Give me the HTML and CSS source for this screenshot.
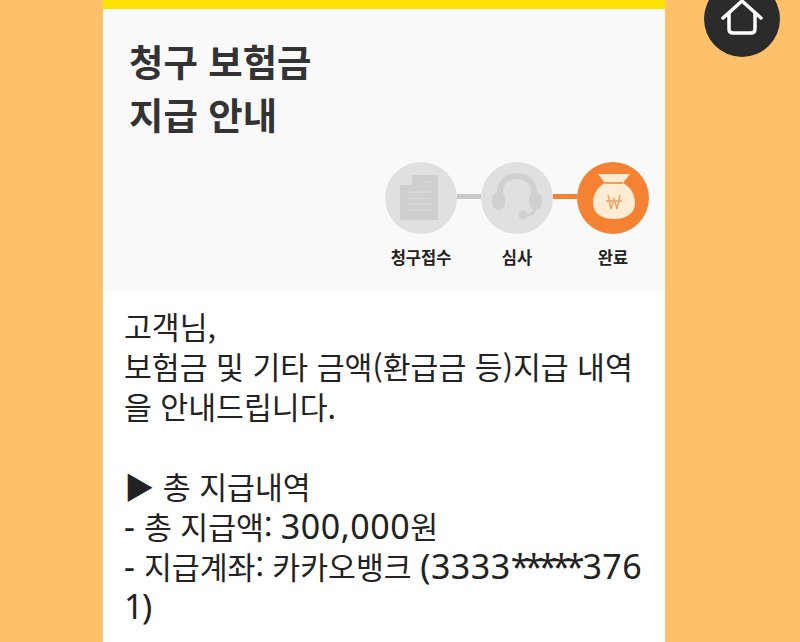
FILE: index.html
```html
<!DOCTYPE html>
<html lang="ko">
<head>
<meta charset="utf-8"/>
<title>청구 보험금 지급 안내</title>
<link rel="stylesheet" href="styles.css">
</head>
<body>
<div class="card">
  <div class="head">
    <h1>청구 보험금<br>지급 안내</h1>
    <div class="steps">
      <div class="step">
        <div class="circle">
          <svg width="72" height="72" viewBox="0 0 72 72">
            <path d="M15 23H27V13H53V58H15Z" fill="#cfcfcf"/>
            <path d="M22 30H46M22 36H46M22 42H46M22 48H46M38 20H46" stroke="#dedede" stroke-width="1.2" fill="none"/>
          </svg>
        </div>
        <span>청구접수</span>
      </div>
      <div class="line"></div>
      <div class="step">
        <div class="circle">
          <svg width="72" height="72" viewBox="0 0 72 72">
            <path d="M19 36V30C19 20 27 14 36 14C45 14 53 20 53 30V36" stroke="#d0d0d0" stroke-width="6" fill="none"/>
            <rect x="11" y="30" width="13" height="18" rx="6.500" fill="#d0d0d0"/>
            <rect x="48" y="30" width="13" height="18" rx="6.500" fill="#d0d0d0"/>
            <path d="M54 46C54 51 49 53 44 53" stroke="#d0d0d0" stroke-width="3" fill="none"/>
            <circle cx="42" cy="53" r="4.500" fill="#d0d0d0"/>
          </svg>
        </div>
        <span>심사</span>
      </div>
      <div class="line on"></div>
      <div class="step">
        <div class="circle on">
          <svg width="72" height="72" viewBox="0 0 72 72">
            <path d="M21 12H53L46 21C54 25 58 33 58 41C58 51 50 57 37 57C24 57 16 51 16 41C16 33 20 25 28 21Z" fill="#fdecd2"/>
            <path d="M28 21H46" stroke="#f58132" stroke-width="1.500"/>
            <path d="M31 33L34 47L37 37L40 47L43 33M29 39H45" stroke="#e8a46c" stroke-width="1.500" fill="none"/>
          </svg>
        </div>
        <span>완료</span>
      </div>
    </div>
  </div>
  <div class="content">
    <p>고객님,<br>보험금 및 기타 금액(환급금 등)지급 내역<br>을 안내드립니다.</p>
    <p class="gap">▶ 총 지급내역<br><span class="num">-</span> 총 지급액: <span class="num">300,000</span>원<br><span class="num">-</span> 지급계좌: 카카오뱅크 <span class="num">(3333<span class="stars">*****</span>376</span><br><span class="num tight">1)</span></p>
  </div>
</div>
<a class="home">
  <svg width="44" height="40" viewBox="0 0 44 40">
    <path d="M3 19L22 2L41 19M9 14V30C9 33 10.500 34 13 34H31C33.500 34 35 33 35 30V14" stroke="#fff" stroke-width="3.500" fill="none" stroke-linecap="round" stroke-linejoin="round"/>
  </svg>
</a>
</body>
</html>
```
FILE: styles.css
```css
html, body {
  height: 100%;
  overflow: hidden;
}
body {
  margin: 0;
  background: #fec069;
  font-family: "Noto Sans CJK KR", "Noto Sans", sans-serif;
  color: #222;
}
.card {
  width: 562px;
  height: 642px;
  margin-left: 103px;
  background: #fff;
  overflow: hidden;
}
.head {
  background: #f9f9f9;
  border-top: 9px solid #ffe200;
  padding: 26px 16px 0 26px;
  box-sizing: border-box;
  height: 291px;
}
h1 {
  margin: 0;
  font-size: 37.4px;
  line-height: 53px;
  font-weight: 700;
  color: #333;
}
.steps {
  display: flex;
  justify-content: flex-end;
  margin-top: 21px;
}
.step {
  width: 72px;
  display: flex;
  flex-direction: column;
  align-items: center;
}
.step span {
  margin-top: 13px;
  font-size: 16.5px;
  line-height: 20px;
  font-weight: 700;
  color: #222;
  white-space: nowrap;
}
.circle {
  width: 72px;
  height: 72px;
  border-radius: 50%;
  background: #e0e0e0;
}
.circle.on {
  background: #f58132;
}
.circle svg {
  display: block;
}
.line {
  width: 24px;
  height: 5px;
  margin-top: 32px;
  background: #c8c8c8;
}
.line.on {
  background: #f58132;
}
.content {
  padding: 15px 20px 0 21px;
  font-size: 30.3px;
  line-height: 40px;
  font-weight: 400;
  white-space: nowrap;
}
.content p {
  margin: 0;
}
.content .gap {
  margin-top: 40px;
}
.num {
  font-family: "Noto Sans", sans-serif;
  font-size: 34px;
  letter-spacing: 0.5px;
}
.num.tight {
  letter-spacing: -1.5px;
}
.stars {
  letter-spacing: -5px;
  margin-right: 3px;
}
.home {
  position: absolute;
  left: 704px;
  top: -19px;
  width: 76px;
  height: 76px;
  border-radius: 50%;
  background: #2b2b2b;
  display: flex;
  align-items: center;
  justify-content: center;
}
```
